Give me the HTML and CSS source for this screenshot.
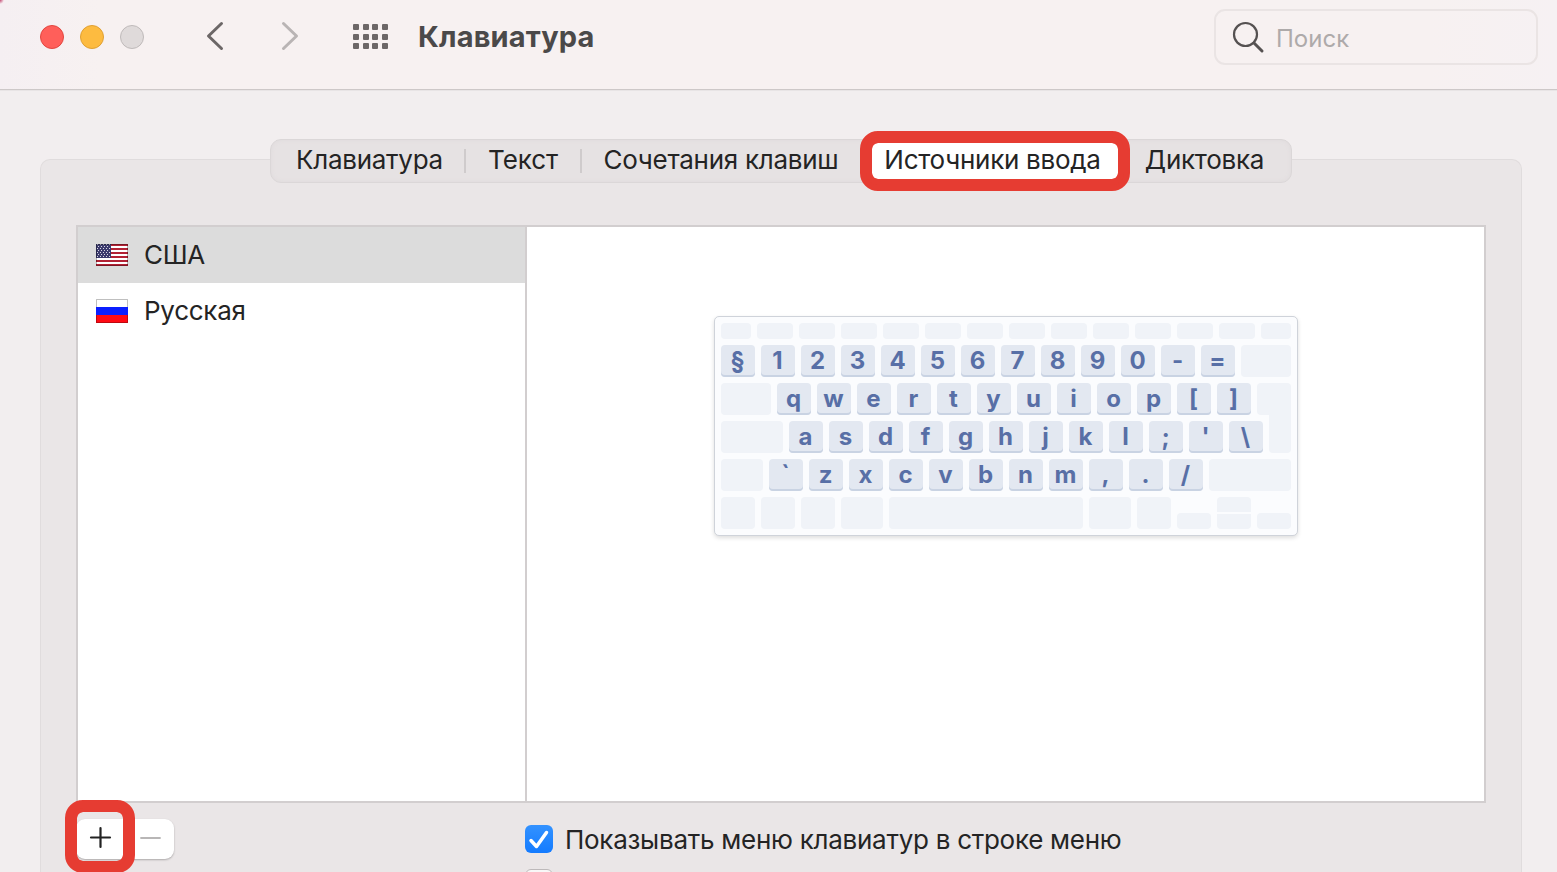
FILE: index.html
```html
<!DOCTYPE html>
<html lang="ru">
<head>
<meta charset="utf-8">
<title>Клавиатура</title>
<link rel="stylesheet" href="styles.css">
</head>
<body>
<header class="toolbar">
  <div class="lights"><i class="light red"></i><i class="light yellow"></i><i class="light off"></i></div>
  <svg class="back" width="18" height="30" viewBox="0 0 18 30"><path d="M15.5 2.5 2.5 15 15.5 27.500"/></svg>
  <svg class="forward" width="18" height="30" viewBox="0 0 18 30"><path d="M2.500 2.500 15.500 15 2.500 27.500"/></svg>
  <div class="grid"><i></i><i></i><i></i><i></i><i></i><i></i><i></i><i></i><i></i><i></i><i></i><i></i></div>
  <h1 class="title">Клавиатура</h1>
  <div class="search">
    <svg width="34" height="34" viewBox="0 0 34 34"><circle cx="13.500" cy="13.500" r="11.500"/><path class="handle" d="M22 22 30 30"/></svg>
    <span>Поиск</span>
  </div>
</header>
<main class="content">
  <nav class="tabs">
    <span class="tab t1">Клавиатура</span><i class="sep"></i>
    <span class="tab t2">Текст</span><i class="sep"></i>
    <span class="tab t3">Сочетания клавиш</span>
    <span class="tab active">Источники ввода</span>
    <span class="tab t5">Диктовка</span>
  </nav>
  <section class="panel">
    <div class="sources">
      <div class="list">
        <div class="row selected">
          <svg width="32" height="24" viewBox="0 0 32 24"><defs><pattern id="stars" width="3" height="4" patternUnits="userSpaceOnUse"><path fill="#fff" fill-opacity=".8" d="M1 1h1v1H1zM2 3h1v1H2z"/></pattern></defs><path fill="#fff" d="M0 1h32v22H0z"/><path stroke="#b22234" stroke-width="2" shape-rendering="crispEdges" d="M0 2h32M0 6h32M0 10h32M0 14h32M0 18h32M0 22h32"/><path fill="#3c3b6e" d="M0 1h15v14H0z"/><path fill="url(#stars)" d="M1 1h13v13H1z"/><path stroke="#000" stroke-opacity=".3" d="M.5 1.500h31v21H.5z"/></svg>
          <span>США</span>
        </div>
        <div class="row">
          <svg width="32" height="24" viewBox="0 0 32 24"><path fill="#fff" d="M0 0h32v8H0z"/><path fill="#0a1fff" d="M0 8h32v8H0z"/><path fill="#ff0a14" d="M0 16h32v8H0z"/><path stroke="#000" stroke-opacity=".25" d="M.5 8V.5h31V8M.5 16v7.500h31V16"/></svg>
          <span>Русская</span>
        </div>
      </div>
      <div class="preview">
        <div class="keyboard">
          <div class="krow fn"><i class="w30"></i><i></i><i></i><i></i><i></i><i></i><i></i><i></i><i></i><i></i><i></i><i></i><i></i><i class="w30"></i></div>
          <div class="krow"><b>§</b><b>1</b><b>2</b><b>3</b><b>4</b><b>5</b><b>6</b><b>7</b><b>8</b><b>9</b><b>0</b><b>-</b><b>=</b><i class="w50"></i></div>
          <div class="krow"><i class="w50"></i><b>q</b><b>w</b><b>e</b><b>r</b><b>t</b><b>y</b><b>u</b><b>i</b><b>o</b><b>p</b><b>[</b><b>]</b><i class="enter-top"></i></div>
          <div class="krow"><i class="w62"></i><b>a</b><b>s</b><b>d</b><b>f</b><b>g</b><b>h</b><b>j</b><b>k</b><b>l</b><b>;</b><b>'</b><b>\</b><i class="enter-bottom"></i></div>
          <div class="krow"><i class="w42"></i><b>`</b><b>z</b><b>x</b><b>c</b><b>v</b><b>b</b><b>n</b><b>m</b><b>,</b><b>.</b><b>/</b><i class="w82"></i></div>
          <div class="krow"><i></i><i></i><i></i><i class="w42"></i><i class="space"></i><i class="w42"></i><i></i><i class="half"></i><span class="updown"><i></i><i></i></span><i class="half"></i></div>
        </div>
      </div>
    </div>
    <div class="footer">
      <div class="buttons">
        <svg width="98" height="40" viewBox="0 0 98 40"><path stroke="#222" d="M15 18.500h19M24.500 9v19"/><path stroke="#b8b6b6" stroke-width="1.800" d="M65 19h19"/></svg>
        <i class="mark"></i>
      </div>
      <div class="options">
        <label class="option"><svg width="28" height="28" viewBox="0 0 28 28"><path d="M6 15.500 11.500 21.500 21.500 7.500"/></svg><span>Показывать меню клавиатур в строке меню</span></label>
        <i class="unchecked"></i>
      </div>
    </div>
  </section>
</main>
</body>
</html>
```
FILE: styles.css
```css
* { box-sizing: border-box; }
body { margin: 0; width: 1557px; height: 872px; overflow: hidden; background: #f2eeef; color: #242424; font: 26px/32px Inter, "Liberation Sans", sans-serif; letter-spacing: -.27px; }
svg { display: block; flex: none; fill: none; }
.toolbar { display: flex; height: 91px; padding-left: 40px; border-bottom: 1px solid #e8e4e5; background: radial-gradient(circle at 0 0, #c4456f 0, #c4456f00 4px), linear-gradient(90deg, #f5eff2, #f7f1f1 100px, #f7f1f1 1430px, #f6f1f3); box-shadow: inset 0 -1px #cdc8c8; }
.lights { display: flex; gap: 16px; margin-top: 25px; }
.light { width: 24px; height: 24px; border: 1px solid #e2463f; border-radius: 50%; background: #ff5f5a; }
.light.yellow { border-color: #e0a033; background: #fdbb40; }
.light.off { border-color: #bfbaba; background: #dfdada; }
.back, .forward { margin-top: 21px; margin-left: 62px; stroke: #6c6767; stroke-width: 3; stroke-linecap: round; stroke-linejoin: round; }
.forward { margin-left: 57px; stroke: #b9b4b4; }
.grid { display: grid; grid-template-columns: repeat(4, 6px); grid-auto-rows: 6px; gap: 3.7px; margin: 24px 0 0 54px; }
.grid i { border-radius: 1px; background: #6c6767; }
.title { width: 220px; margin: 20px 0 0 30px; font-size: 29px; line-height: 34px; font-weight: 650; letter-spacing: .15px; color: #4b4949; white-space: nowrap; }
.search { display: flex; width: 324px; height: 56px; margin: 9px 19px 0 auto; padding: 11px 0 0 16px; gap: 10px; border: 2px solid #eae4e4; border-radius: 11px; color: #aeaaaa; font-size: 24px; letter-spacing: 0; }
.search svg { margin-top: -1px; stroke: #555151; stroke-width: 2.2; stroke-linecap: round; }
.search .handle { stroke-width: 3; }
.search span { padding-top: 1px; }
.content { padding: 48px 35px 0 40px; }
.tabs { position: relative; z-index: 1; display: flex; align-items: center; width: 1022px; height: 44px; margin-left: 230px; border: 1px solid #dbd7d8; border-radius: 11px; background: #e6e2e3; box-shadow: inset 0 0 4px #dedadb; white-space: nowrap; }
.tab { flex: none; padding-bottom: 2px; text-align: center; }
.sep { width: 2px; height: 24px; background: #cfcbcc; }
.t1 { width: 193px; padding-left: 4px; }
.t2 { width: 114px; letter-spacing: -.1px; }
.t3 { width: 278px; }
.active { position: relative; width: 270px; height: 60px; margin-top: -1px; padding: 0 5px 0 0; border: 12px solid #e63c32; border-radius: 18px; background: #fff; line-height: 34px; }
.active::before { content: ""; position: absolute; inset: 0; border-radius: 6px; box-shadow: 0 0 0 6px #e63c32; }
.t5 { width: 149px; }
.panel { width: 1482px; height: 713px; margin-top: -24px; padding: 65px 35px 0; border: 1px solid #e0dcdd; border-bottom: 0; border-radius: 10px 10px 0 0; background: #eae6e7; overflow: hidden; }
.sources { display: flex; height: 578px; border: 2px solid #d2cecf; background: #fff; }
.list { width: 449px; border-right: 2px solid #d2cecf; }
.row { display: flex; align-items: center; height: 56px; padding-left: 18px; gap: 16px; }
.selected { background: #dcdcdc; }
.preview { padding: 89px 0 0 187px; }
.keyboard { display: flex; flex-direction: column; gap: 6px; width: 584px; height: 220px; padding: 6px; border: 1px solid #cfd3da; border-radius: 5px; background: #fbfcfe; box-shadow: 0 2px 4px #0002; }
.krow { display: flex; gap: 6px; height: 32px; }
.krow i { width: 34px; border-radius: 4px; background: #f0f3f8; }
.krow b { width: 34px; padding-right: 1px; border-radius: 4px; background: #e3e8f1; box-shadow: inset 0 -2px #c9d3e3; color: #586fa6; font-size: 24px; line-height: 31px; font-weight: 750; letter-spacing: 0; text-align: center; }
.krow.fn { height: 16px; }
.krow.fn i { width: 36px; }
.krow.fn .w30 { width: 30px; }
.krow .w42 { width: 42px; }
.krow .w50 { width: 50px; }
.krow .w62 { width: 62px; }
.krow .w82 { width: 82px; }
.krow .space { width: 194px; }
.krow .enter-top { border-bottom-right-radius: 0; }
.krow .enter-bottom { width: 22px; height: 38px; margin-top: -6px; border-radius: 0 0 4px 4px; }
.krow .half { height: 16px; margin-top: 16px; }
.updown { display: flex; flex-direction: column; gap: 2px; }
.updown i { height: 15px; }
.updown i:first-child { border-radius: 4px 4px 0 0; }
.updown i:last-child { border-radius: 0 0 4px 4px; }
.footer { display: flex; height: 69px; }
.buttons { position: relative; width: 98px; height: 40px; margin-top: 16px; border-radius: 9px; background: #fff; box-shadow: 0 1px 2px #0004; }
.buttons svg { stroke-width: 2.200; stroke-linecap: round; }
.mark { position: absolute; left: -11px; top: -19px; width: 70px; height: 73px; border: 12px solid #e63c32; border-radius: 18px; }
.mark::before { content: ""; position: absolute; inset: 0; border-radius: 6px; box-shadow: 0 0 0 4px #e63c32; }
.options { margin: 22px 0 0 351px; }
.option { display: flex; gap: 12px; white-space: nowrap; }
.option svg { border-radius: 6px; background: linear-gradient(#3392ff, #147bff); stroke: #fff; stroke-width: 3.500; stroke-linecap: round; stroke-linejoin: round; }
.option span { margin-top: -1px; }
.unchecked { display: block; width: 28px; height: 28px; margin-top: 13px; border: 1px solid #bdb9ba; border-radius: 6px; background: #f8f7f7; }
```
